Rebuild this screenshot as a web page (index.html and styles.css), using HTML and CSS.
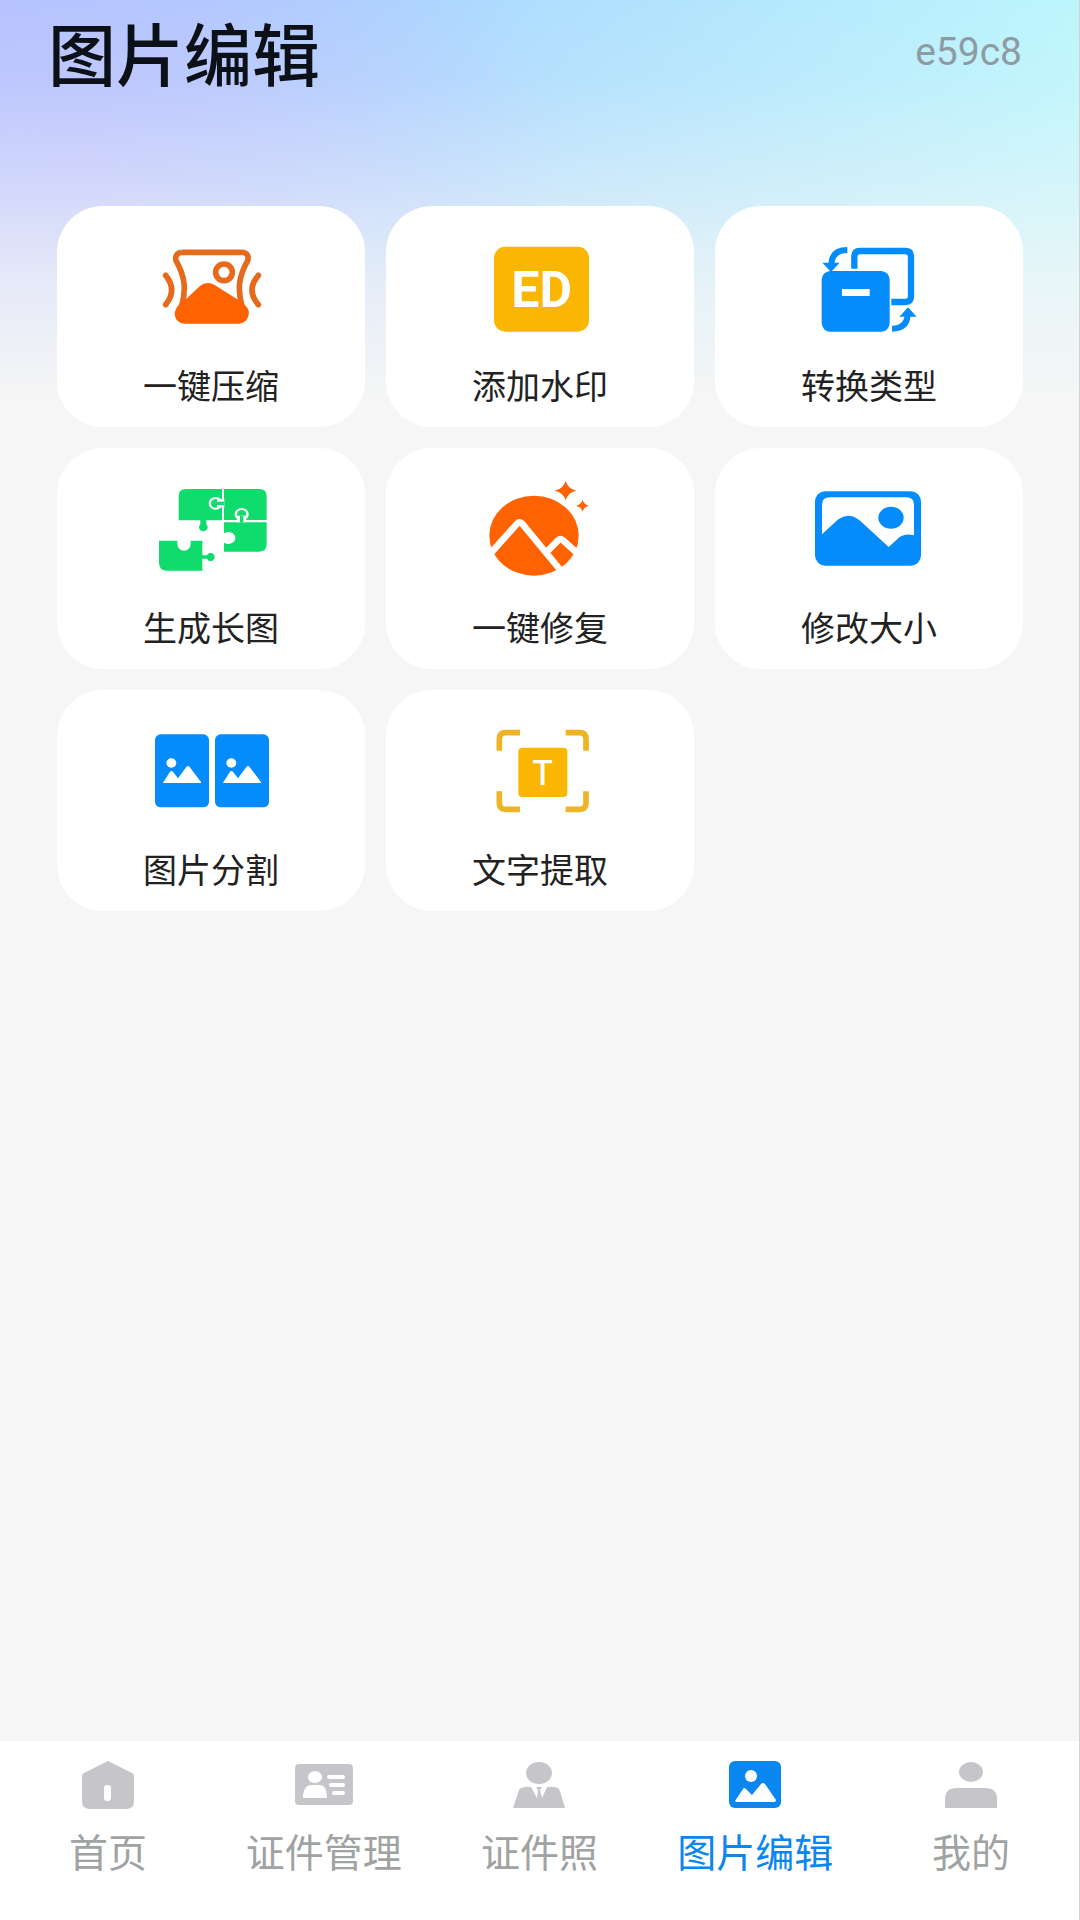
FILE: index.html
```html
<!DOCTYPE html>
<html lang="zh-CN">
<head>
    <meta charset="UTF-8">
    <meta name="viewport" content="width=device-width, initial-scale=1.0">
    <title>图片编辑</title>
    <link rel="stylesheet" href="styles.css">
</head>
<body>

<header class="header">
    <h1 class="title">图片编辑</h1>
    <span class="code">e59c8</span>
</header>

<main class="tools">
    <button class="tool orange" type="button">
        <svg class="tool-icon" viewBox="0 0 420 342" aria-hidden="true">
            <path d="M122 97H304Q326 101 320 122C292 172 290 206 302 256M122 97Q100 101 105 122C133 172 135 206 123 256" fill="none" stroke="#e66a1c" stroke-width="17"/>
            <path d="M126 246L176 199Q198 180 222 196L302 246Q328 266 323 285Q316 311 294 311H131Q106 310 101 285Q99 266 126 240Z" fill="currentColor"/>
            <circle cx="249" cy="157" r="25" fill="none" stroke="#e66a1c" stroke-width="17"/>
            <path d="M74 166Q110 210 74 254M352 166Q314 210 352 254" fill="none" stroke="#e66a1c" stroke-width="17" stroke-linecap="round"/>
        </svg>
        <span class="tool-name">一键压缩</span>
    </button>

    <button class="tool yellow" type="button">
        <svg class="tool-icon" viewBox="0 0 420 342" aria-hidden="true">
            <rect x="72" y="80" width="285" height="255" rx="34" fill="currentColor"/>
            <text class="badge-text" x="215" y="262">ED</text>
        </svg>
        <span class="tool-name">添加水印</span>
    </button>

    <button class="tool blue" type="button">
        <svg class="tool-icon" viewBox="0 0 420 342" aria-hidden="true">
            <rect x="68" y="153" width="204" height="182" rx="26" fill="currentColor"/>
            <rect x="129" y="207" width="83" height="21" fill="#fff"/>
            <path d="M166 146V110Q166 93 183 93H319Q336 93 336 110V229Q336 246 319 246H277" fill="none" stroke="currentColor" stroke-width="19"/>
            <path d="M145 90Q98 90 97 134M279 326Q324 326 326 284" fill="none" stroke="currentColor" stroke-width="18"/>
            <path d="M70 128H122L96 156ZM301 290H353L327 262Z" fill="currentColor"/>
        </svg>
        <span class="tool-name">转换类型</span>
    </button>

    <button class="tool green" type="button">
        <svg class="tool-icon" viewBox="0 -24 420 342" aria-hidden="true">
            <path d="M135 57H243V151H196V163A13 12 0 1 1 178 163V151H113V79Q113 57 135 57Z" fill="currentColor"/>
            <ellipse cx="224" cy="100" rx="21" ry="19" fill="#fff"/>
            <path d="M249 57H355Q377 57 377 79V150H249Z" fill="currentColor"/>
            <ellipse cx="224" cy="100" rx="14" ry="13" fill="currentColor"/>
            <path d="M228 88H250V112H228Z" fill="#fff"/>
            <path d="M228 95H250V105H228Z" fill="currentColor"/>
            <path d="M249 157H377V223Q377 245 355 245H249V218A21 18 0 1 0 249 190Z" fill="currentColor"/>
            <ellipse cx="302" cy="133" rx="21" ry="19" fill="#fff"/>
            <ellipse cx="302" cy="133" rx="14" ry="13" fill="currentColor"/>
            <path d="M289 137H315V157H289Z" fill="#fff"/>
            <path d="M297 137H307V158H297Z" fill="currentColor"/>
            <path d="M54 212H109V222A20 20 0 1 0 149 222V212H184V256H198A12 12 0 1 1 198 266H184V302H78Q54 302 54 279Z" fill="currentColor"/>
        </svg>
        <span class="tool-name">生成长图</span>
    </button>

    <button class="tool orange" type="button">
        <svg class="tool-icon" viewBox="0 -24 420 342" aria-hidden="true">
            <ellipse cx="192" cy="197" rx="134" ry="120" fill="currentColor"/>
            <path d="M60 252L141 161Q149 153 157 162L271 300M230 246L264 211Q271 204 279 211L322 250" fill="none" stroke="#fff" stroke-width="20"/>
            <path d="M287 32Q293 56 319 62Q293 68 287 91Q281 68 254 62Q281 56 287 32ZM338 89Q341 103 357 107Q341 111 338 125Q334 111 318 107Q334 103 338 89Z" fill="currentColor"/>
        </svg>
        <span class="tool-name">一键修复</span>
    </button>

    <button class="tool blue" type="button">
        <svg class="tool-icon" viewBox="0 -24 420 342" aria-hidden="true">
            <rect x="48" y="64" width="318" height="223" rx="31" fill="currentColor"/>
            <path d="M93 82H321Q345 82 345 104V196Q314 188 293 209L269 231L184 153Q150 124 118 148L69 193V104Q69 82 93 82Z" fill="#fff"/>
            <ellipse cx="276" cy="143" rx="38" ry="33" fill="currentColor"/>
        </svg>
        <span class="tool-name">修改大小</span>
    </button>

    <button class="tool blue" type="button">
        <svg class="tool-icon" viewBox="0 -18 420 342" aria-hidden="true">
            <rect x="42" y="73" width="162" height="219" rx="17" fill="currentColor"/>
            <rect x="222" y="73" width="162" height="219" rx="17" fill="currentColor"/>
            <g fill="#fff">
                <ellipse cx="91" cy="159" rx="15" ry="14"/>
                <path d="M66 218L86 187Q91 179 97 187L111 205L136 171Q141 165 146 171L180 216V219H66Z"/>
                <ellipse cx="271" cy="159" rx="15" ry="14"/>
                <path d="M246 218L266 187Q271 179 277 187L291 205L316 171Q321 165 326 171L360 216V219H246Z"/>
            </g>
        </svg>
        <span class="tool-name">图片分割</span>
    </button>

    <button class="tool yellow" type="button">
        <svg class="tool-icon" viewBox="0 -18 420 342" aria-hidden="true">
            <path d="M88 122V87Q88 68 107 68H150M287 68H329Q348 68 348 87V122M348 244V280Q348 298 329 298H287M150 298H107Q88 298 88 280V244" fill="none" stroke="#edb526" stroke-width="17"/>
            <rect x="145" y="113" width="147" height="148" rx="12" fill="currentColor"/>
            <text class="letter-text" x="218" y="225">T</text>
        </svg>
        <span class="tool-name">文字提取</span>
    </button>
</main>

<!-- Bottom tabs -->
<nav class="tabs">
    <a class="tab" href="#home">
        <svg class="tab-icon" viewBox="0 0 60 60" aria-hidden="true">
            <path d="M28 7Q30 5 32 7L54 18Q56 19 56 21V47Q56 54 48 54H12Q4 54 4 47V21Q4 19 6 18Z" fill="currentColor"/>
            <rect x="26" y="30" width="7" height="16" rx="3" fill="#fff"/>
        </svg>
        <span class="tab-name">首页</span>
    </a>
    <a class="tab" href="#manage">
        <svg class="tab-icon" viewBox="0 0 60 60" aria-hidden="true">
            <rect x="1" y="9" width="58" height="41" rx="4" fill="currentColor"/>
            <ellipse cx="21" cy="22" rx="7" ry="6" fill="#fff"/>
            <path d="M9 43Q9 30 18 30H25Q33 30 33 43Z" fill="#fff"/>
            <path d="M35 22H49M37 30H49M40 38H49" stroke="#fff" stroke-width="4" stroke-linecap="round"/>
        </svg>
        <span class="tab-name">证件管理</span>
    </a>
    <a class="tab" href="#photo">
        <svg class="tab-icon" viewBox="0 0 60 60" aria-hidden="true">
            <ellipse cx="30" cy="18" rx="13" ry="11" fill="currentColor"/>
            <path d="M12 33Q18 31 22 32L28 43L29 35L27 32H33L31 35L33 43L38 32Q43 31 49 33L51 36L56 53H4L10 35Z" fill="currentColor"/>
        </svg>
        <span class="tab-name">证件照</span>
    </a>
    <a class="tab active" href="#edit" aria-current="page">
        <svg class="tab-icon" viewBox="0 0 60 60" aria-hidden="true">
            <rect x="4" y="6" width="52" height="47" rx="6" fill="currentColor"/>
            <circle cx="26" cy="21" r="6" fill="#fff"/>
            <path d="M10 46L18 34Q19 32 21 34L27 40L36 29Q38 27 40 29L51 45Q51 47 49 47H11Z" fill="#fff"/>
        </svg>
        <span class="tab-name">图片编辑</span>
    </a>
    <a class="tab" href="#mine">
        <svg class="tab-icon" viewBox="0 0 60 60" aria-hidden="true">
            <ellipse cx="30" cy="17" rx="12" ry="10" fill="currentColor"/>
            <path d="M4 53V44Q4 33 16 33H44Q56 33 56 44V53Z" fill="currentColor"/>
        </svg>
        <span class="tab-name">我的</span>
    </a>
</nav>

</body>
</html>
```
FILE: styles.css
```css
* {
    box-sizing: border-box;
}

body {
    margin: 0;
    min-height: 100vh;
    display: flex;
    flex-direction: column;
    font-family: "Noto Sans CJK SC", sans-serif;
    background-color: #f6f6f6;
    /* soft fade over the coloured wash at the top */
    background-image:
        linear-gradient(to bottom, rgba(246, 246, 246, 0) 0, rgba(246, 246, 246, 0.1) 80px, rgba(246, 246, 246, 0.4) 180px, rgba(246, 246, 246, 0.75) 280px, #f6f6f6 400px),
        radial-gradient(ellipse 480px 320px at 8% 150px, #b9c1ff, rgba(185, 193, 255, 0)),
        linear-gradient(to right, #b2c4ff 0, #acd9ff 40%, #b4e8fd 70%, #bdf6fd 100%);
    background-repeat: no-repeat;
    background-size: 100% 400px;
    border-right: 1px solid #d0d2d4;
}

.header {
    display: flex;
    align-items: center;
    justify-content: space-between;
    height: 104px;
    padding: 0 57px 0 48px;
}

.title {
    margin: 0;
    font-size: 68px;
    font-weight: 500;
    line-height: 100px;
    color: #0b1116;
}

.code {
    font-family: Roboto, sans-serif;
    font-size: 39px;
    line-height: 48px;
    color: #8f9ba3;
}

.tools {
    flex: 1;
    display: grid;
    grid-template-columns: repeat(3, 1fr);
    align-content: start;
    gap: 21px;
    padding: 102px 56px 21px 57px;
}

.tool {
    display: flex;
    flex-direction: column;
    align-items: center;
    padding: 14px 0 18px;
    border: 0;
    border-radius: 46px;
    background: #fff;
    font-family: inherit;
    cursor: pointer;
}

.tool-icon {
    width: 140px;
    height: 114px;
}

.tool-name {
    margin-top: 27px;
    font-size: 34px;
    line-height: 48px;
    color: #222;
}

.orange {
    color: #ff6200;
}

.yellow {
    color: #fab602;
}

.blue {
    color: #058cfc;
}

.green {
    color: #0fdc6c;
}

.badge-text,
.letter-text {
    fill: #fff;
    text-anchor: middle;
}

.badge-text {
    font-family: Roboto, sans-serif;
    font-size: 150px;
    font-weight: 700;
}

.letter-text {
    font-family: Inter, sans-serif;
    font-size: 100px;
    font-weight: 500;
}

.tabs {
    display: grid;
    grid-template-columns: repeat(5, 1fr);
    padding: 14px 0 46px;
    background: #fff;
}

.tab {
    display: flex;
    flex-direction: column;
    align-items: center;
    color: #c6c5ca;
    text-decoration: none;
}

.tab-icon {
    width: 60px;
    height: 60px;
}

.tab-name {
    margin-top: 11px;
    font-size: 39px;
    line-height: 48px;
    color: #9fa3a2;
}

.active,
.active .tab-name {
    color: #0a86f0;
}
```
